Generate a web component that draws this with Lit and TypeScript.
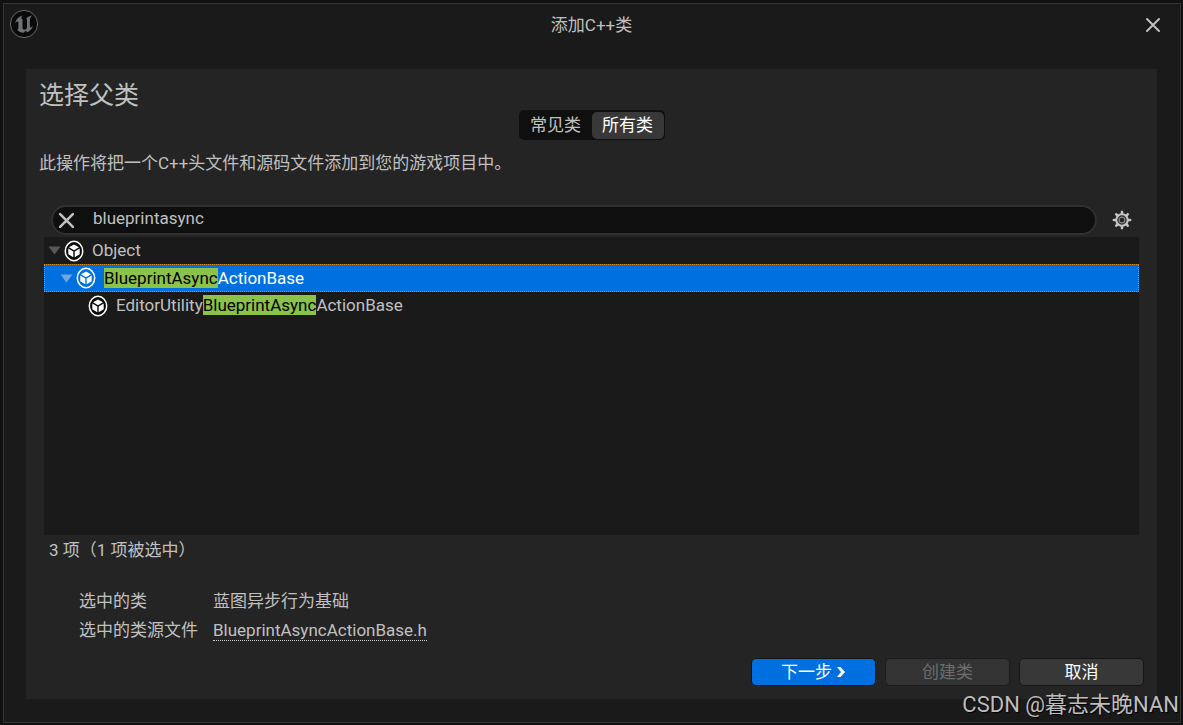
import { LitElement, html, css, svg, nothing } from "lit";
import { customElement, state } from "lit/decorators.js";

interface ClassRow {
  depth: number;
  before: string;
  match: string;
  after: string;
  expandable: boolean;
}

const ROWS: ClassRow[] = [
  { depth: 0, before: "Object", match: "", after: "", expandable: true },
  { depth: 1, before: "", match: "BlueprintAsync", after: "ActionBase", expandable: true },
  { depth: 2, before: "EditorUtility", match: "BlueprintAsync", after: "ActionBase", expandable: false },
];

const TEETH = [0, 45, 90, 135, 180, 225, 270, 315];

@customElement("app-root")
export class AppRoot extends LitElement {
  @state() private tab = "all";
  @state() private selected = 1;

  static styles = css`
    :host {
      display: block;
      height: 100vh;
      min-height: 600px;
      box-sizing: border-box;
      padding: 3px 2px 2px 3px;
      position: relative;
      background: #111111;
      color: #c0c0c0;
      font: 17px/24px Roboto, "Noto Sans CJK SC", sans-serif;
      overflow: hidden;
    }
    * {
      box-sizing: border-box;
    }
    button,
    input {
      font: inherit;
      color: inherit;
      border: 0;
      background: none;
      padding: 0;
      margin: 0;
      outline: none;
    }
    svg {
      display: block;
    }
    .window {
      height: 100%;
      border: 1px solid #353535;
      background: #1a1a1a;
      display: flex;
      flex-direction: column;
      padding: 0 23px 23px 22px;
    }
    .titlebar {
      height: 65px;
      flex: none;
      display: grid;
      grid-template-columns: 1fr auto 1fr;
      margin: 0 -17px;
      padding-top: 5px;
      align-items: start;
    }
    .titlebar h1 {
      margin: 0;
      padding-top: 4px;
      font-size: 17px;
      line-height: 24px;
      font-weight: 400;
    }
    .close {
      justify-self: end;
      padding: 8px 13px;
    }
    .panel {
      flex: 1;
      min-height: 0;
      background: #242424;
      display: flex;
      flex-direction: column;
      padding: 9px 13px 13px;
    }
    .panel h2 {
      margin: 0;
      font-size: 25px;
      line-height: 36px;
      font-weight: 400;
    }
    .tabs {
      align-self: center;
      display: flex;
      margin-top: -4px;
      padding: 2px 1px 1px;
      height: 30px;
      background: #0f0f0f;
      border-radius: 5px;
    }
    .tab {
      width: 72px;
      padding-bottom: 2px;
      border-radius: 5px;
    }
    .tab.active {
      background: #383838;
      color: #ffffff;
    }
    .intro {
      margin: 11px 0 0;
    }
    .search {
      margin: 30px 12px 0 12px;
      display: flex;
      align-items: center;
      gap: 15px;
    }
    .box {
      flex: 1;
      height: 30px;
      display: flex;
      align-items: center;
      gap: 18px;
      padding-left: 5px;
      border: 2px solid #303030;
      border-radius: 15px;
      background: #0f0f0f;
    }
    .box input {
      flex: 1;
      height: 26px;
      padding-bottom: 4px;
    }
    .tree {
      flex: 1;
      min-height: 90px;
      margin: 2px 5px 0;
      background: #1a1a1a;
    }
    .row {
      height: 27px;
      display: flex;
      align-items: center;
      border: 1px solid transparent;
      cursor: default;
    }
    .row.selected {
      height: 28px;
      background: #0070e0;
      border: 1px dotted #d08a30;
      color: #ffffff;
    }
    .indent {
      width: 12px;
    }
    .arrow {
      width: 19px;
      padding-left: 3px;
    }
    .name {
      padding-left: 8px;
      white-space: pre;
      line-height: 20px;
    }
    .row:not(.selected) .name {
      padding-bottom: 1px;
    }
    mark {
      display: inline-block;
      background: #8bc24a;
      color: #000000;
    }
    .count {
      margin: 3px 10px 0;
    }
    .details {
      display: grid;
      grid-template-columns: 134px auto;
      justify-content: start;
      row-gap: 5px;
      margin: 27px 0 0 40px;
    }
    .details dt,
    .details dd {
      margin: 0;
    }
    .details a {
      display: inline-block;
      line-height: 19px;
      color: inherit;
      text-decoration: none;
      border-bottom: 1px dotted #d0d0d0;
    }
    .actions {
      display: flex;
      justify-content: flex-end;
      gap: 9px;
      margin-top: 16px;
    }
    .action {
      width: 125px;
      height: 28px;
      display: flex;
      align-items: center;
      justify-content: center;
      gap: 4px;
      border: 1px solid #151515;
      border-radius: 5px;
      background: #383838;
      color: #ffffff;
    }
    .action.primary {
      background: #0070e0;
    }
    .action:disabled {
      background: #333333;
      border-color: #1c1c1c;
      color: #6c6c6c;
    }
    .watermark {
      position: absolute;
      right: 4px;
      bottom: 4px;
      font-size: 22px;
      line-height: 32px;
      color: #bdbdbd;
      text-shadow: 1px 1px 1px #000000;
      pointer-events: none;
    }
  `;

  private classIcon(hole: string) {
    return svg`<svg width="20" height="22" viewBox="0 0 20 22">
      <ellipse cx="10" cy="11" rx="8.7" ry="9.7" fill=${hole} stroke="#fff" stroke-width="1.5"/>
      <path d="M10 4.6 15 7.3 10 10.3 5 7.3Z M4.3 8.5 9.3 11.4V17.2L4.3 14.2Z M15.7 8.5 10.7 11.4V17.2L15.7 14.2Z" fill="#fff"/>
    </svg>`;
  }

  private cross(size: number, width: number) {
    return html`<svg width=${size} height=${size} viewBox="0 0 16 16">
      <path d="M2 2 14 14M14 2 2 14" stroke="#c0c0c0" stroke-width=${width} stroke-linecap="round" />
    </svg>`;
  }

  private row(r: ClassRow, i: number) {
    const on = i === this.selected;
    return html`<div
      class="row ${on ? "selected" : ""}"
      role="treeitem"
      aria-level=${r.depth + 1}
      aria-selected=${on}
      @click=${() => (this.selected = i)}
    >
      ${Array.from({ length: r.depth }, () => html`<span class="indent"></span>`)}
      <span class="arrow">
        ${r.expandable
          ? html`<svg width="13" height="9" viewBox="0 0 13 9">
              <path d="M0.5 0.5H12.5L6.5 8.5Z" fill=${on ? "#6fa8e2" : "#585858"} />
            </svg>`
          : nothing}
      </span>
      ${this.classIcon(on ? "#0070e0" : "#0a0a0a")}
      <span class="name">${r.before}${r.match ? html`<mark>${r.match}</mark>` : nothing}${r.after}</span>
    </div>`;
  }

  render() {
    return html`
      <main class="window">
        <header class="titlebar">
          <svg width="30" height="30" viewBox="0 0 30 30" aria-hidden="true">
            <circle cx="15" cy="15" r="13.6" fill="#0a0a0a" stroke="#6a6a6a" stroke-width="1" />
            <path
              d="M13.6 6.6C9.8 7.6 7 10.500 6 14.300C7 13 8.200 12.200 8.900 12.500C9.400 12.700 9.400 13.200 9.400 13.800V19.200C9.400 20.300 8.800 20.600 8 20.400C9.600 22.600 12.200 23.600 14.700 23.700L16.600 21.800L18.500 23.200C21.200 21.900 23.200 19.800 24 16.800C22.800 18 21.900 18.700 21.200 18.400C20.900 18.200 20.900 17.900 20.900 17.500V9.900C21.300 8.600 22.100 7.500 23.200 6.600C20.400 7 18.400 8.200 17 9.800C17.700 9.600 18 9.900 18 10.600V19C17.300 20.100 16.400 20.800 15.300 20.600C14 20.300 13.500 19.600 13.500 18.900V11C13.500 9.800 13.100 9.300 12.100 9.200C12.400 8.200 12.900 7.300 13.600 6.600Z"
              fill="#707274"
            />
          </svg>
          <h1>添加C++类</h1>
          <button class="close" aria-label="关闭">${this.cross(16, 2)}</button>
        </header>
        <section class="panel">
          <h2>选择父类</h2>
          <div class="tabs" role="tablist">
            ${[["common", "常见类"], ["all", "所有类"]].map(
              ([id, label]) => html`<button
                role="tab"
                class="tab ${this.tab === id ? "active" : ""}"
                aria-selected=${this.tab === id}
                @click=${() => (this.tab = id)}
              >${label}</button>`
            )}
          </div>
          <p class="intro">此操作将把一个C++头文件和源码文件添加到您的游戏项目中。</p>
          <div class="search">
            <div class="box">
              <button aria-label="清除">${this.cross(17, 2.4)}</button>
              <input type="text" aria-label="搜索" .value=${"blueprintasync"} />
            </div>
            <button aria-label="设置">
              <svg width="20" height="20" viewBox="0 0 20 20">
                ${TEETH.map(
                  (a) => svg`<path d="M9 0.700H11L11.500 4.500H8.500Z" fill="#c6c6c6" transform="rotate(${a} 10 10)"/>`
                )}
                <circle cx="10" cy="10" r="5.700" fill="none" stroke="#c6c6c6" stroke-width="2" />
                <circle cx="10" cy="10" r="2.900" fill="none" stroke="#8c8c8c" stroke-width="1.200" />
              </svg>
            </button>
          </div>
          <div class="tree" role="tree">${ROWS.map((r, i) => this.row(r, i))}</div>
          <div class="count">3 项（1 项被选中）</div>
          <dl class="details">
            <dt>选中的类</dt>
            <dd>蓝图异步行为基础</dd>
            <dt>选中的类源文件</dt>
            <dd><a href="#">BlueprintAsyncActionBase.h</a></dd>
          </dl>
          <div class="actions">
            <button class="action primary">
              下一步
              <svg width="10" height="12" viewBox="0 0 10 12">
                <path d="M1 1H4.500L9 6 4.500 11H1L5 6Z" fill="#fff" />
              </svg>
            </button>
            <button class="action" disabled>创建类</button>
            <button class="action">取消</button>
          </div>
        </section>
      </main>
      <div class="watermark">CSDN @暮志未晚NAN</div>
    `;
  }
}
